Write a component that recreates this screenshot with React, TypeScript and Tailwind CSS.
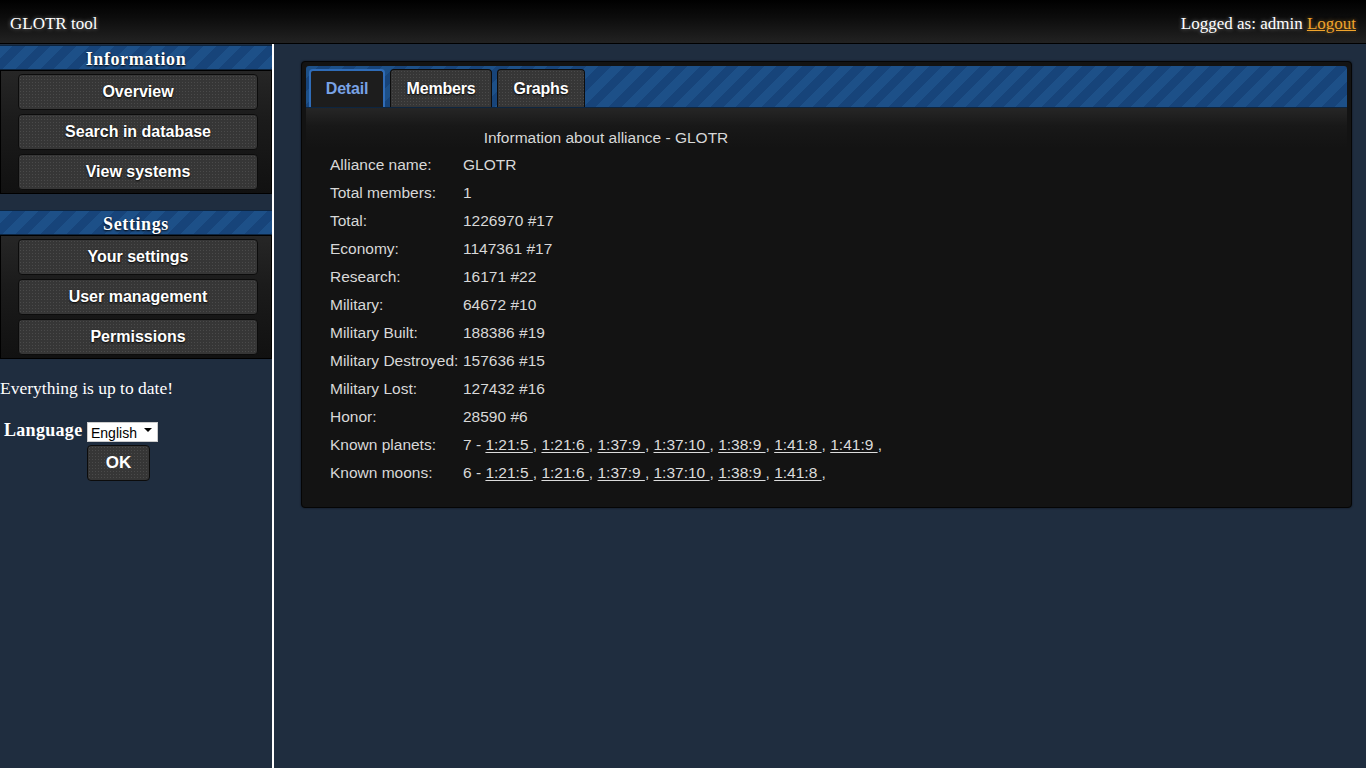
import { useState } from "react";

const stripes =
  "bg-[repeating-linear-gradient(135deg,#1d5088_0px,#1d5088_9px,#17447a_9px,#17447a_18px)]";

const dotted =
  "bg-[#363636] bg-[radial-gradient(#4a4a4a_0.8px,transparent_0.9px)] bg-[length:3px_3px]";

const serif = "font-['Liberation_Serif',serif]";
const sans = "font-['Liberation_Sans',Arial,sans-serif]";

const SideButton = ({ label }: { label: string }) => (
  <button
    className={`${dotted} ${sans} block w-[240px] h-[36px] ml-[17px] rounded-[4px] border border-[#0c0c0c] text-white font-bold text-[16px] [text-shadow:0_1px_2px_#000]`}
  >
    {label}
  </button>
);

const SideSection = ({ title, items }: { title: string; items: string[] }) => (
  <div>
    <div
      className={`${stripes} ${serif} h-[25px] border-y border-[#0d2540] text-center text-white font-bold text-[18px] tracking-[0.6px] leading-[26px] [text-shadow:0_1px_2px_#000]`}
    >
      {title}
    </div>
    <div className="border border-black bg-[linear-gradient(180deg,#262626_0%,#1b1b1b_40%,#111_100%)] py-[3px] flex flex-col gap-1">
      {items.map((i) => (
        <SideButton key={i} label={i} />
      ))}
    </div>
  </div>
);

const rows: [string, string][] = [
  ["Alliance name:", "GLOTR"],
  ["Total members:", "1"],
  ["Total:", "1226970 #17"],
  ["Economy:", "1147361 #17"],
  ["Research:", "16171 #22"],
  ["Military:", "64672 #10"],
  ["Military Built:", "188386 #19"],
  ["Military Destroyed:", "157636 #15"],
  ["Military Lost:", "127432 #16"],
  ["Honor:", "28590 #6"],
];

const planets = ["1:21:5", "1:21:6", "1:37:9", "1:37:10", "1:38:9", "1:41:8", "1:41:9"];
const moons = ["1:21:5", "1:21:6", "1:37:9", "1:37:10", "1:38:9", "1:41:8"];

const Coords = ({ list }: { list: string[] }) => (
  <>
    {list.length} -{" "}
    {list.map((c) => (
      <span key={c}>
        <a href="#" className="underline underline-offset-2 text-[#dcdcdc]">
          {c + " "}
        </a>
        {", "}
      </span>
    ))}
  </>
);

const tabs: [string, string][] = [
  ["Detail", "w-[76px]"],
  ["Members", "w-[102px]"],
  ["Graphs", "w-[88px]"],
];

export default function App() {
  const [tab, setTab] = useState("Detail");
  return (
    <div className="min-h-screen flex flex-col bg-[#1f2d3f] text-white">
      <header
        className={`${serif} h-[44px] flex items-center justify-between px-[10px] pt-[4px] border-b border-black bg-[linear-gradient(180deg,#000_0%,#0c0c0c_40%,#222_100%)] text-[17px] [text-shadow:0_0_4px_rgba(255,255,255,0.45)]`}
      >
        <span>GLOTR tool</span>
        <span>
          Logged as: admin{" "}
          <a href="#" className="text-[#f0a42c] underline [text-shadow:0_0_4px_rgba(240,164,44,0.5)]">
            Logout
          </a>
        </span>
      </header>

      <div className="flex flex-1">
        <aside className="w-[274px] shrink-0 border-r-2 border-white pt-px">
          <SideSection title="Information" items={["Overview", "Search in database", "View systems"]} />
          <div className="h-[16px]" />
          <SideSection title="Settings" items={["Your settings", "User management", "Permissions"]} />

          <p className={`${serif} text-[17.5px] leading-[20px] mt-[19px]`}>Everything is up to date!</p>

          <div className="grid grid-cols-[87px_auto] justify-start mt-[22px]">
            <span className={`${serif} font-bold text-[18px] tracking-[0.3px] leading-[20px] self-center pl-[4px]`}>
              Language
            </span>
            <div className="relative w-[71px] h-[20px]">
              <select
                className={`${sans} appearance-none w-full h-full bg-white text-black text-[14px] pl-[3px] border border-[#ccc] outline-none`}
                defaultValue="en"
              >
                <option value="en">English</option>
              </select>
              <span className="absolute right-[6px] top-[8px] w-0 h-0 border-l-[4px] border-r-[4px] border-t-[4px] border-l-transparent border-r-transparent border-t-black pointer-events-none" />
            </div>
            <span />
            <button
              className={`${dotted} ${sans} mt-[5px] w-[63px] h-[36px] rounded-[4px] border border-[#0c0c0c] text-white font-bold text-[17px]`}
            >
              OK
            </button>
          </div>
        </aside>

        <main className="flex-1 pl-[27px] pr-[14px] pt-[17px]">
          <div className="border border-[#050505] rounded-[4px] bg-[#131313] p-[4px] shadow-[0_0_2px_rgba(0,0,0,0.6)]">
            <div className={`${stripes} h-[42px] rounded-t-[3px] flex items-end gap-[5px] pl-[3px] border-b border-[#0d2540]`}>
              {tabs.map(([t, w]) =>
                t === tab ? (
                  <button
                    key={t}
                    onClick={() => setTab(t)}
                    className={`${sans} ${w} h-[38px] rounded-t-[4px] border-2 border-b-0 border-[#2f6cb8] bg-[#1d1d1d] text-[#79a3e6] font-bold text-[16px] tracking-[-0.2px]`}
                  >
                    {t}
                  </button>
                ) : (
                  <button
                    key={t}
                    onClick={() => setTab(t)}
                    className={`${dotted} ${sans} ${w} h-[38px] rounded-t-[4px] border border-b-0 border-[#0d0d0d] text-white font-bold text-[16px] tracking-[-0.2px] [text-shadow:0_1px_2px_#000]`}
                  >
                    {t}
                  </button>
                )
              )}
            </div>

            <div
              className={`${sans} bg-[linear-gradient(180deg,#262626_0px,#181818_18px,#131313_40px)] pt-[20px] pb-[16px] pl-[24px] text-[15.5px] text-[#d8d8d8]`}
            >
              <table className="border-collapse">
                <caption className="leading-[20px] pb-[3px]">Information about alliance - GLOTR</caption>
                <tbody>
                  {rows.map(([k, v]) => (
                    <tr key={k} className="h-[28px]">
                      <td className="w-[133px] whitespace-nowrap p-0 pr-[3px]">{k}</td>
                      <td className="p-0 whitespace-nowrap">{v}</td>
                    </tr>
                  ))}
                  <tr className="h-[28px]">
                    <td className="p-0 whitespace-nowrap">Known planets:</td>
                    <td className="p-0 whitespace-nowrap">
                      <Coords list={planets} />
                    </td>
                  </tr>
                  <tr className="h-[28px]">
                    <td className="p-0 whitespace-nowrap">Known moons:</td>
                    <td className="p-0 whitespace-nowrap">
                      <Coords list={moons} />
                    </td>
                  </tr>
                </tbody>
              </table>
            </div>
          </div>
        </main>
      </div>
    </div>
  );
}
